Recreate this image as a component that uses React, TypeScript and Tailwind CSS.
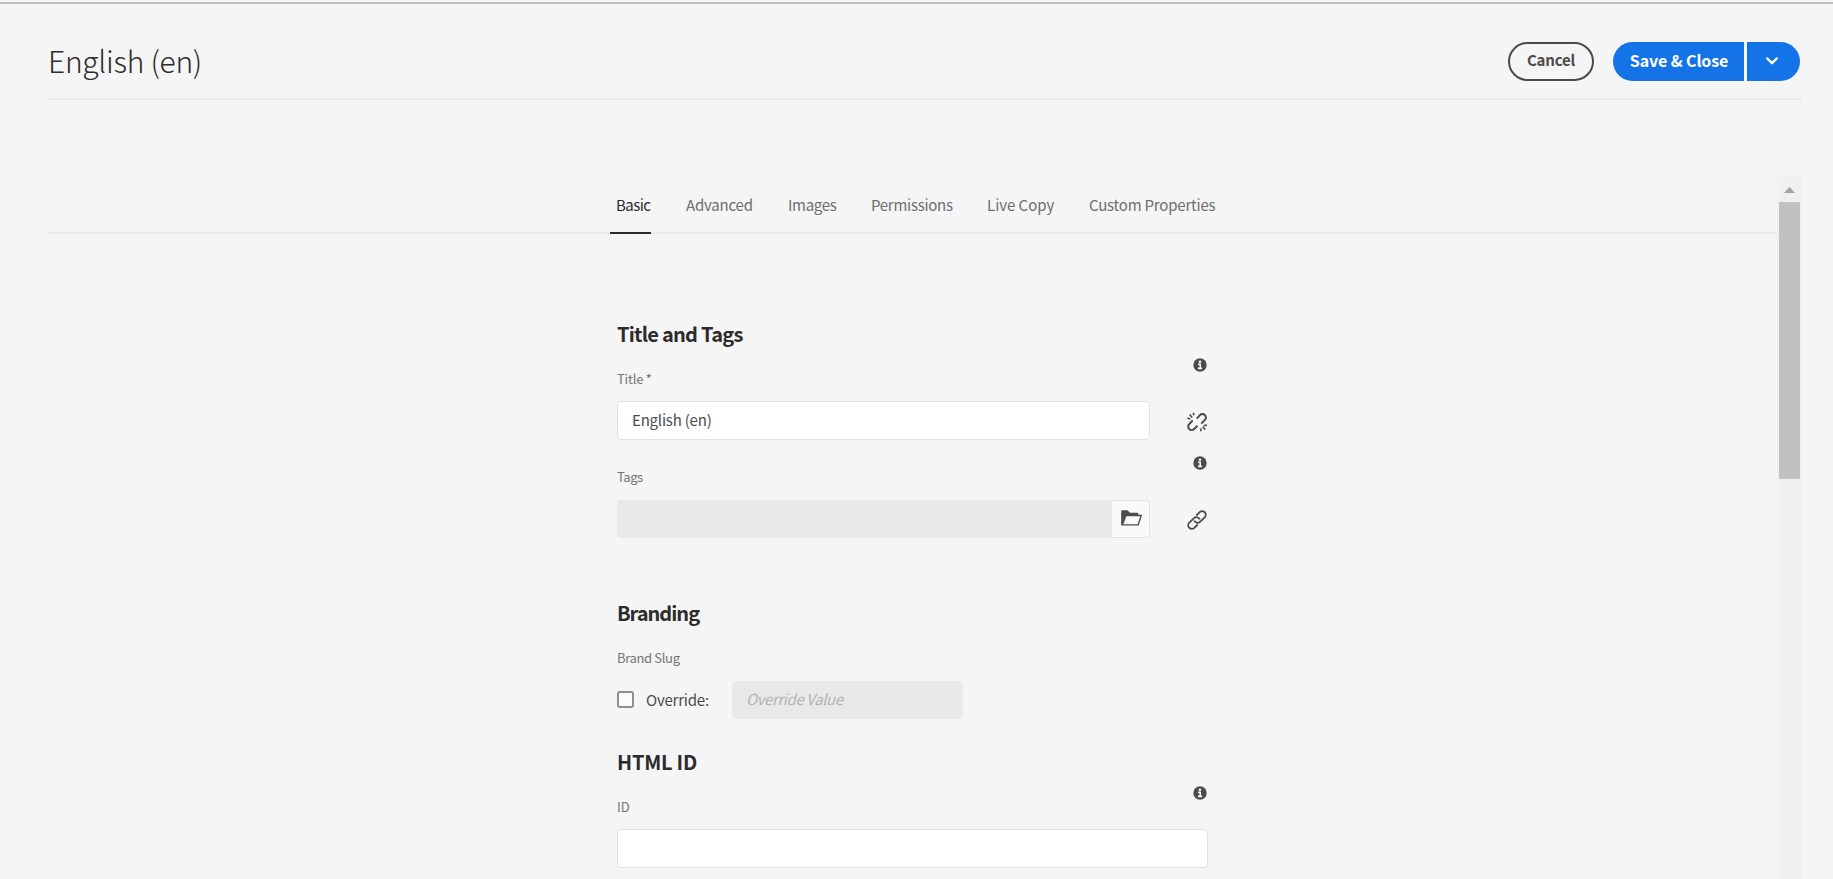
import type { ReactNode } from 'react';

const tabs = [
  { label: 'Basic', box: 'w-[41px] pl-[6px] text-[#2c2c2c] border-b-2 border-[#2c2c2c] tracking-[-0.55px]' },
  { label: 'Advanced', box: 'ml-[35px] w-[102px] tracking-[-0.2px]' },
  { label: 'Images', box: 'w-[83px] tracking-[-0.3px]' },
  { label: 'Permissions', box: 'w-[116px] tracking-[-0.27px]' },
  { label: 'Live Copy', box: 'w-[102px] tracking-[-0.02px]' },
  { label: 'Custom Properties', box: 'tracking-[-0.2px]' },
];

function InfoIcon() {
  return (
    <svg className="mt-[10px] mr-px size-[14px]" viewBox="0 0 14 14" fill="none">
      <circle cx="7" cy="7" r="6.7" fill="#4b4b4b" />
      <circle cx="7" cy="3.7" r="1.3" fill="#f5f5f5" />
      <path d="M5 6.3H7.2V10.2M4.9 10.4H9.1" stroke="#f5f5f5" strokeWidth="1.6" />
    </svg>
  );
}

function LinkIcon() {
  const half = 'M7.2 10.5a3.6 3.6 0 0 0 5.8 1.3L17.7 7.3a3.55 3.55 0 0 0-5-5.1L9.3 5.5';
  return (
    <svg className="mt-[2px] mr-px size-5" viewBox="0 0 20 20" fill="none" stroke="#4b4b4b" strokeWidth="1.8">
      <path d={half} />
      <path d={half} transform="rotate(180 10 10)" />
    </svg>
  );
}

function UnlinkIcon() {
  return (
    <svg className="mt-[2px] mr-px size-5" viewBox="0 0 20 20" fill="none" stroke="#4b4b4b" strokeWidth="2">
      <path d="M9.8 6.6 12.9 3.1a3.4 3.4 0 0 1 5 4.8L14.3 11.6" />
      <path d="M5.7 8.5 2.2 12.1a3.4 3.4 0 0 0 4.9 4.9L10.5 13.8" />
      <path
        strokeWidth="1.6"
        d="M6.2.8 7 3.3M2.6 2.6 5.3 5.5M.4 6.1 3.3 6.9M16.8 13.6 20 13.1M15.6 14.8 18.3 17.6M13.5 16.4 14.2 19.2"
      />
    </svg>
  );
}

function FolderIcon() {
  return (
    <svg className="h-4 w-[21px]" viewBox="0 0 21 16" fill="none">
      <path d="M.2 15V1.2Q.2.3 1.2.3H6.5L9 2.8H16.4Q17.4 2.8 17.4 3.8V5.2H4.8L1.5 15Z" fill="#4b4b4b" />
      <path d="M5 5.5H20.2L17.2 14.8H1.4Z" stroke="#4b4b4b" strokeWidth="1.3" fill="#fafafa" />
    </svg>
  );
}

function Heading({ children, className = '' }: { children: string; className?: string }) {
  return <h2 className={`h-[30px] pt-px text-[20px] leading-[30px] font-bold text-[#2c2c2c] ${className}`}>{children}</h2>;
}

function LabelRow({ children, info = false, className = '' }: { children: ReactNode; info?: boolean; className?: string }) {
  return (
    <div className={`flex items-start justify-between ${className}`}>
      <label className="pt-[19px] text-[13px] leading-6 text-[#747474]">{children}</label>
      {info && <InfoIcon />}
    </div>
  );
}

export default function App() {
  return (
    <div className="flex h-[879px] w-full flex-col overflow-hidden bg-[#f5f5f5] pt-[2px] font-['Noto_Sans_CJK_SC','Open_Sans',sans-serif]">
      <div className="h-[2px] shrink-0 bg-[#c1c1c1]" />
      <header className="mr-[31px] ml-12 flex h-24 shrink-0 items-start justify-between border-b-2 border-[#eaeaea]">
        <h1 className="mt-[36px] text-[30px] leading-10 font-light tracking-[-0.3px] text-[#2c2c2c]">English (en)</h1>
        <div className="mt-[38px] mr-[2px] flex h-[39px]">
          <button className="mr-[19px] w-[86px] rounded-full border-2 border-[#4b4b4b] pb-[4px] text-[15px] leading-none font-bold tracking-[-0.2px] text-[#4b4b4b]">
            Cancel
          </button>
          <button className="w-[131px] rounded-l-full bg-[#1473e6] pb-[4px] pl-px text-[16px] leading-none font-bold tracking-[-0.1px] whitespace-nowrap text-white">
            Save &amp; Close
          </button>
          <button className="ml-[3px] flex w-[53px] items-center justify-center rounded-r-full bg-[#1473e6] pr-[4px] pb-[2px]">
            <svg className="h-2 w-3" viewBox="0 0 12 8" fill="none" stroke="white" strokeWidth="2.4" strokeLinecap="round" strokeLinejoin="round">
              <path d="M1.2 1.5 6 6.2 10.8 1.5" />
            </svg>
          </button>
        </div>
      </header>

      <div className="mt-[77px] mr-[31px] ml-12 flex min-h-0 grow">
        <main className="grow">
          <nav className="flex h-[57px] border-b-2 border-[#eaeaea] pl-[562px] text-[15px] leading-6 text-[#6e6e6e]">
            {tabs.map((tab) => (
              <a key={tab.label} className={`h-[57px] shrink-0 pt-[16px] whitespace-nowrap ${tab.box}`}>
                {tab.label}
              </a>
            ))}
          </nav>

          <form className="ml-[569px] w-[591px] pt-[84px]">
            <Heading className="tracking-[-0.75px]">Title and Tags</Heading>
            <LabelRow info className="h-[53px] tracking-[-0.2px]">Title *</LabelRow>
            <div className="flex h-[39px] items-center justify-between">
              <div className="h-[39px] w-[533px] rounded-[4px] border border-[#e1e1e1] bg-white pl-[14px] text-[15px] leading-[36px] tracking-[-0.2px] text-[#4b4b4b]">
                English (en)
              </div>
              <UnlinkIcon />
            </div>
            <LabelRow info className="h-[60px] pt-[6px] tracking-[-0.45px]">Tags</LabelRow>
            <div className="flex h-[38px] items-center justify-between">
              <div className="flex h-[38px] w-[533px]">
                <div className="grow rounded-l-[4px] bg-[#e9e9e9]" />
                <div className="flex w-[38px] items-center justify-center rounded-r-[4px] border border-l-0 border-[#e1e1e1] bg-[#fafafa] pb-[2px] pl-[2px]">
                  <FolderIcon />
                </div>
              </div>
              <LinkIcon />
            </div>

            <Heading className="mt-[59px] tracking-[-1px]">Branding</Heading>
            <LabelRow className="h-[54px] tracking-[-0.35px]">Brand Slug</LabelRow>
            <div className="flex h-[38px] items-center">
              <div className="mb-px size-[17px] rounded-[3px] border-2 border-[#8e8e8e] bg-[#fbfbfb]" />
              <span className="ml-3 w-[86px] text-[15px] leading-6 tracking-[-0.2px] text-[#4b4b4b]">Override:</span>
              <div className="h-[38px] w-[231px] rounded-[5px] bg-[#e9e9e9] pl-[14px] text-[15px] leading-[36px] tracking-[-0.4px] text-[#b3b3b3] italic">
                Override Value
              </div>
            </div>

            <Heading className="mt-[27px] tracking-[-0.25px]">HTML ID</Heading>
            <LabelRow info className="h-[53px]">ID</LabelRow>
            <div className="h-[39px] rounded-[4px] border border-[#e1e1e1] bg-white" />
          </form>
        </main>

        <div className="flex w-[25px] shrink-0 flex-col items-center bg-[#f0f0f0] pr-[1px]">
          <svg className="mt-[10px] ml-px h-[6px] w-[11px]" viewBox="0 0 11 6">
            <path d="M0 6 5.5 0 11 6Z" fill="#a3a3a3" />
          </svg>
          <div className="mt-[9px] h-[277px] w-[21px] bg-[#c1c1c1]" />
        </div>
      </div>
    </div>
  );
}
